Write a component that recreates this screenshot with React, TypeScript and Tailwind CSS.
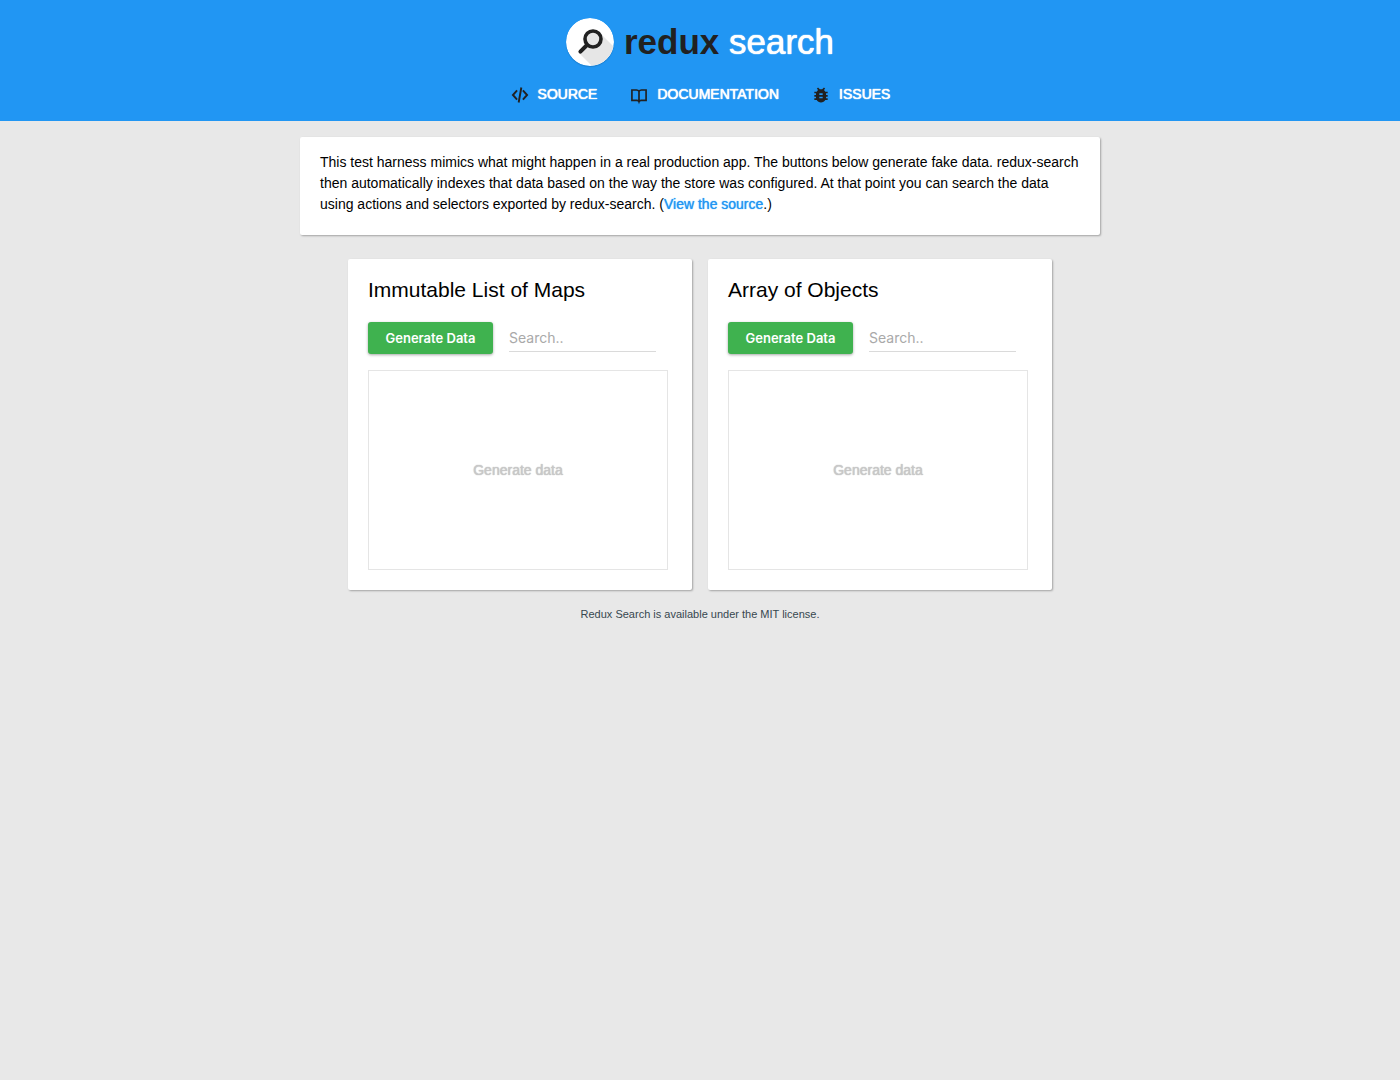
import { useState } from "react";
import type { ReactNode } from "react";

function Logo() {
  return (
    <svg viewBox="0 0 48 48" className="size-12 rounded-full shadow-[0_1px_1px_rgba(0,0,0,0.15)]" aria-hidden="true">
      <defs>
        <clipPath id="disc">
          <circle cx="24" cy="24" r="24" />
        </clipPath>
      </defs>
      <circle cx="24" cy="24" r="24" fill="#fff" />
      <path clipPath="url(#disc)" d="M13 35L33 14L52 33V52H30Z" fill="#e6e6e6" />
      <circle cx="27" cy="21" r="8" fill="#e6e6e6" stroke="#212121" strokeWidth="3.6" />
      <path d="M21 27L14.4 33.6" stroke="#212121" strokeWidth="4" strokeLinecap="round" />
    </svg>
  );
}

function SourceIcon() {
  return (
    <svg viewBox="0 0 24 24" className="size-5" fill="none" stroke="#212121" strokeWidth="2.3" aria-hidden="true">
      <path d="M8.5 6.5L3.5 12L8.5 17.5M15.5 6.5L20.5 12L15.5 17.5M13.6 3L10.4 21" />
    </svg>
  );
}

function DocsIcon() {
  return (
    <svg viewBox="0 0 24 24" className="size-5" fill="none" stroke="#212121" strokeWidth="2" aria-hidden="true">
      <path d="M12 7.5Q11 6 9 6H3.5V18.5H9.5Q11.5 18.5 12 20Q12.5 18.5 14.5 18.5H20.5V6H15Q13 6 12 7.5V20.5" />
    </svg>
  );
}

function IssuesIcon() {
  return (
    <svg viewBox="0 0 24 24" className="size-5" fill="#212121" aria-hidden="true">
      <path d="M20 8h-2.81c-.45-.78-1.07-1.45-1.82-1.96L17 4.41 15.59 3l-2.17 2.17C12.96 5.06 12.49 5 12 5s-.96.06-1.41.17L8.41 3 7 4.41l1.62 1.63C7.88 6.55 7.26 7.22 6.81 8H4v2h2.09c-.05.33-.09.66-.09 1v1H4v2h2v1c0 .34.04.67.09 1H4v2h2.81c1.04 1.79 2.97 3 5.19 3s4.15-1.21 5.19-3H20v-2h-2.09c.05-.33.09-.66.09-1v-1h2v-2h-2v-1c0-.34-.04-.67-.09-1H20V8zm-6 8h-4v-2h4v2zm0-4h-4v-2h4v2z" />
    </svg>
  );
}

function NavLink({ icon, children }: { icon: ReactNode; children: ReactNode }) {
  return (
    <a
      href="#"
      className="flex items-start text-sm leading-5 text-white [text-shadow:0_0_1px_currentColor,0_0_1px_currentColor]"
    >
      <span className="mt-px mr-2">{icon}</span>
      {children}
    </a>
  );
}

const card = "rounded-xs bg-white px-5 shadow-[1px_1px_2px_rgba(0,0,0,0.3)]";

function SearchPanel({ title }: { title: string }) {
  const [query, setQuery] = useState("");
  return (
    <section className={`${card} w-full max-w-86 pt-[17px] pb-5`}>
      <h2 className="text-[21px] leading-7">{title}</h2>
      <div className="mt-[18px] flex gap-4">
        <button
          type="button"
          className="h-8 w-[125px] shrink-0 rounded-[3px] bg-[#3fb24f] pt-0.5 text-center font-[Inter,sans-serif] text-[13px] font-semibold text-white shadow-[0_1px_3px_rgba(0,0,0,0.35)]"
        >
          Generate Data
        </button>
        <input
          type="text"
          aria-label={`Search ${title}`}
          value={query}
          onChange={(e) => setQuery(e.target.value)}
          placeholder="Search.."
          className="mr-4 h-[30px] min-w-0 flex-1 border-b border-[#dadada] pt-0.5 font-[Inter,sans-serif] text-sm outline-none placeholder:text-[#a9a9a9]"
        />
      </div>
      <div className="mt-4 mr-1 flex h-50 items-center justify-center border border-[#e5e5e5] text-sm text-[#c8c8c8] [text-shadow:0_0_1px_currentColor,0_0_1px_currentColor]">
        Generate data
      </div>
    </section>
  );
}

export default function App() {
  return (
    <div className="min-h-screen bg-[#e8e8e8] font-['Liberation_Sans',Arial,sans-serif] text-black">
      <header className="flex flex-col items-center bg-[#2196f3] pt-[18px] pb-4">
        <h1 className="flex items-center gap-2.5 text-[35px] leading-12 text-white">
          <Logo />
          <span className="[text-shadow:0_0_1px_currentColor,0_0_1px_currentColor]">
            <b className="text-[#212121] [text-shadow:none]">redux</b> search
          </span>
        </h1>
        <nav className="mt-[18px] flex gap-8">
          <NavLink icon={<SourceIcon />}>SOURCE</NavLink>
          <NavLink icon={<DocsIcon />}>DOCUMENTATION</NavLink>
          <NavLink icon={<IssuesIcon />}>ISSUES</NavLink>
        </nav>
      </header>
      <main className="flex flex-col items-center">
        <div className={`${card} mt-4 w-full max-w-200 pt-[15px] pb-5`}>
          <p className="text-sm leading-[21px]">
            This test harness mimics what might happen in a real production app. The buttons below generate fake data.
            redux-search then automatically indexes that data based on the way the store was configured. At that point
            you can search the data using actions and selectors exported by redux-search. (
            <a href="#" className="text-[#2196f3] [text-shadow:0_0_1px_currentColor]">
              View the source
            </a>
            .)
          </p>
        </div>
        <div className="mt-6 flex w-full justify-center gap-4">
          <SearchPanel title="Immutable List of Maps" />
          <SearchPanel title="Array of Objects" />
        </div>
      </main>
      <footer className="mt-4 text-center text-[11px] leading-4 text-[#37474f]">
        Redux Search is available under the MIT license.
      </footer>
    </div>
  );
}
